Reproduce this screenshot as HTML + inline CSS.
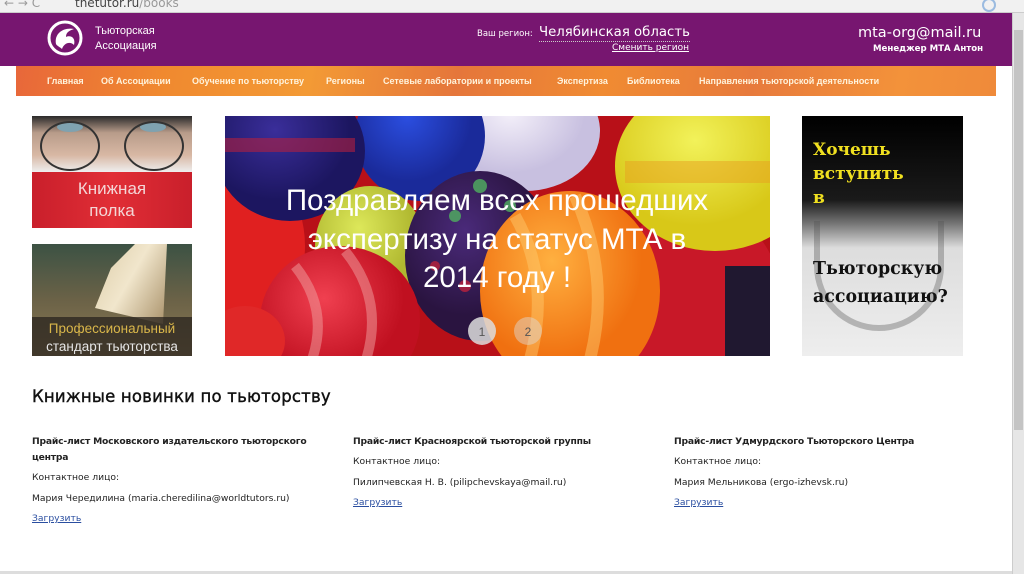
<!DOCTYPE html>
<html><head><meta charset="utf-8"><style>
*{margin:0;padding:0;box-sizing:border-box}
body{width:1024px;height:574px;overflow:hidden;background:#fff;font-family:"DejaVu Sans","Liberation Sans",sans-serif;position:relative}
.abs{position:absolute}
.chrome{left:0;top:0;width:1024px;height:13px;background:#f1f1f1;border-bottom:1px solid #ccc;font-size:12px;color:#555;}
.top{left:0;top:13px;width:1012px;height:53px;background:#771670;color:#fff}
.nav{left:16px;top:66px;width:980px;height:30px;background:linear-gradient(100deg,#e8673a 0%,#f0892f 15%,#f39a35 30%,#e5763b 45%,#f08b32 60%,#e77a3c 75%,#f3923a 90%,#ef8a3a 100%)}
.nav span{position:absolute;top:10px;font-size:9px;color:#fff3dc;font-weight:bold;white-space:nowrap;font-family:"Liberation Sans",sans-serif}
.scroll{left:1012px;top:13px;width:12px;height:561px;background:#e6e6e6;border-left:1px solid #ccc}
.thumb{left:1014px;top:30px;width:9px;height:400px;background:#c4c4c4}
h2{position:absolute;left:32px;top:387px;font-size:16.5px;font-weight:normal;-webkit-text-stroke:0.4px #111;color:#111;letter-spacing:.2px}
.col{position:absolute;top:434px;width:300px;font-size:9.2px;color:#222;line-height:20.5px}
.col b{font-weight:bold;line-height:16px;display:block;margin-bottom:2px;letter-spacing:-.2px}
.col a{color:#2a4ea0;text-decoration:underline}
</style></head><body>
<div class="abs chrome"><span style="position:absolute;left:4px;top:-4px;color:#999">← → C</span><span style="position:absolute;left:75px;top:-4px;color:#444">thetutor.ru<span style="color:#999">/books</span></span><span style="position:absolute;left:982px;top:-2px;width:14px;height:14px;border-radius:50%;border:2px solid #9bbbe0"></span></div>
<div class="abs top">
  <svg class="abs" style="left:46px;top:6px" width="38" height="38" viewBox="0 0 38 38"><circle cx="19" cy="19" r="16" fill="none" stroke="#fff" stroke-width="3"/><path d="M10 25 C8 14 18 8 28 10 C22 12 20 14 20 18 C24 16 30 18 28 26 C24 22 18 24 16 30 C14 28 11 27 10 25Z" fill="#fff"/></svg>
  <div class="abs" style="left:95px;top:11px;font-size:11px;line-height:15px;font-family:'Liberation Sans',sans-serif">Тьюторская<br>Ассоциация</div>
  <div class="abs" style="left:477px;top:16px;font-size:8.5px">Ваш регион:</div>
  <div class="abs" style="left:539px;top:11px;font-size:13.3px;border-bottom:1px dotted #ccc;line-height:17px">Челябинская область</div>
  <div class="abs" style="left:612px;top:30px;font-size:9px;text-decoration:underline">Сменить регион</div>
  <div class="abs" style="left:858px;top:12px;font-size:14.5px">mta-org@mail.ru</div>
  <div class="abs" style="left:873px;top:31px;font-size:8.6px;font-weight:bold">Менеджер МТА Антон</div>
</div>
<div class="abs nav">
<span style="left:31px">Главная</span><span style="left:85px">Об Ассоциации</span><span style="left:176px">Обучение по тьюторству</span><span style="left:310px">Регионы</span><span style="left:367px">Сетевые лаборатории и проекты</span><span style="left:541px">Экспертиза</span><span style="left:611px">Библиотека</span><span style="left:683px">Направления тьюторской деятельности</span>
</div>
<div class="abs scroll"></div><div class="abs thumb"></div>

<div class="abs" style="left:32px;top:116px;width:160px;height:112px;overflow:hidden;background:#d9232e">
  <div class="abs" style="left:0;top:0;width:160px;height:56px;background:linear-gradient(#2a2a2a,#b89c8a 30%,#d8b8a4 70%,#eee)"></div>
  <div class="abs" style="left:25px;top:6px;width:26px;height:10px;border-radius:50%;background:#7fa2b0"></div>
  <div class="abs" style="left:108px;top:6px;width:26px;height:10px;border-radius:50%;background:#7fa2b0"></div>
  <div class="abs" style="left:8px;top:5px;width:60px;height:50px;border:2px solid #333;border-radius:50%"></div>
  <div class="abs" style="left:92px;top:5px;width:60px;height:50px;border:2px solid #333;border-radius:50%"></div>
  <div class="abs" style="left:0;top:56px;width:160px;height:56px;background:linear-gradient(90deg,#c91f2b,#e12e36 50%,#c91f2b)"></div>
  <div class="abs" style="left:0;top:62px;width:160px;text-align:center;color:#f3d6d6;font-size:17px;line-height:22px;font-family:'Liberation Sans',sans-serif">Книжная<br>полка</div>
</div>
<div class="abs" style="left:32px;top:244px;width:160px;height:112px;overflow:hidden;background:linear-gradient(#3c5244,#6b6247 50%,#8c7a55)">
  <div class="abs" style="left:55px;top:0;width:80px;height:80px;background:linear-gradient(120deg,#d9c9a3,#f1e6cc 50%,#a89068);clip-path:polygon(30% 30%,60% 0,100% 0,95% 100%,10% 80%)"></div>
  <div class="abs" style="left:0;top:73px;width:160px;height:39px;background:rgba(40,35,30,.75)"></div>
  <div class="abs" style="left:0;top:76px;width:160px;text-align:center;font-size:13.5px;line-height:18px;font-family:'Liberation Sans',sans-serif;color:#e5e5e5"><span style="color:#d9b64a">Профессиональный</span><br>стандарт тьюторства</div>
</div>

<svg class="abs" style="left:225px;top:116px" width="545" height="240" viewBox="0 0 545 240">
<defs>
<radialGradient id="g1" cx=".4" cy=".35"><stop offset="0" stop-color="#3a2e9a"/><stop offset="1" stop-color="#1c1660"/></radialGradient>
<radialGradient id="g2" cx=".4" cy=".35"><stop offset="0" stop-color="#2b4ee0"/><stop offset="1" stop-color="#1a2a9a"/></radialGradient>
<radialGradient id="g3" cx=".4" cy=".35"><stop offset="0" stop-color="#f4f0fa"/><stop offset="1" stop-color="#c8c0e0"/></radialGradient>
<radialGradient id="g4" cx=".4" cy=".35"><stop offset="0" stop-color="#f2f25a"/><stop offset="1" stop-color="#d8c818"/></radialGradient>
<radialGradient id="g5" cx=".4" cy=".35"><stop offset="0" stop-color="#dde85a"/><stop offset="1" stop-color="#b0b830"/></radialGradient>
<radialGradient id="g6" cx=".4" cy=".35"><stop offset="0" stop-color="#4a2a7a"/><stop offset="1" stop-color="#2a1440"/></radialGradient>
<radialGradient id="g7" cx=".4" cy=".35"><stop offset="0" stop-color="#ffb040"/><stop offset="1" stop-color="#f07010"/></radialGradient>
<radialGradient id="g8" cx=".4" cy=".35"><stop offset="0" stop-color="#f04050"/><stop offset="1" stop-color="#c01020"/></radialGradient>
</defs>
<rect width="545" height="240" fill="#b81018"/>
<ellipse cx="10" cy="130" rx="70" ry="90" fill="#e02020"/>
<ellipse cx="470" cy="180" rx="85" ry="90" fill="#c81828"/>
<rect x="500" y="150" width="45" height="90" fill="#201830"/>
<ellipse cx="490" cy="50" rx="100" ry="85" fill="url(#g4)"/>
<rect x="400" y="45" width="145" height="22" fill="#e8a020" opacity=".5"/>
<ellipse cx="300" cy="15" rx="75" ry="60" fill="url(#g3)"/>
<ellipse cx="195" cy="20" rx="65" ry="65" fill="url(#g2)"/>
<ellipse cx="65" cy="35" rx="75" ry="70" fill="url(#g1)"/>
<rect x="0" y="22" width="130" height="14" fill="#b02040" opacity=".6"/>
<ellipse cx="145" cy="130" rx="55" ry="60" fill="url(#g5)"/>
<ellipse cx="255" cy="140" rx="75" ry="85" fill="url(#g6)"/>
<g fill="#50b060" opacity=".8"><circle cx="255" cy="70" r="7"/><circle cx="230" cy="100" r="6"/><circle cx="285" cy="90" r="6"/></g>
<g fill="#a02040"><circle cx="210" cy="150" r="5"/><circle cx="240" cy="170" r="6"/><circle cx="275" cy="185" r="5"/></g>
<ellipse cx="345" cy="175" rx="90" ry="100" fill="url(#g7)"/>
<g stroke="#ffcc70" stroke-width="12" opacity=".45" fill="none"><path d="M290 100 Q330 170 300 260"/><path d="M350 80 Q390 170 360 260"/></g>
<ellipse cx="115" cy="205" rx="80" ry="75" fill="url(#g8)"/>
<g stroke="#f0a0a0" stroke-width="10" opacity=".5" fill="none"><path d="M70 150 Q110 200 80 260"/><path d="M120 135 Q165 190 135 260"/></g>
<ellipse cx="20" cy="225" rx="40" ry="35" fill="#e02828"/>
<g font-family="Liberation Sans,sans-serif" font-size="29.5" fill="#fff" text-anchor="middle">
<text x="272" y="94">Поздравляем всех прошедших</text>
<text x="272" y="133">экспертизу на статус МТА в</text>
<text x="272" y="171">2014 году !</text>
</g>
<circle cx="257" cy="215" r="14" fill="#ddd" opacity=".85"/><text x="257" y="220" font-size="12" text-anchor="middle" fill="#555" font-family="Liberation Sans">1</text>
<circle cx="303" cy="215" r="14" fill="#ddd" opacity=".45"/><text x="303" y="220" font-size="12" text-anchor="middle" fill="#555" font-family="Liberation Sans">2</text>
</svg>

<div class="abs" style="left:802px;top:116px;width:161px;height:240px;overflow:hidden;background:linear-gradient(#000 0%,#1a1a1a 35%,#777 45%,#ddd 55%,#eee 100%)">
  <div class="abs" style="left:12px;top:105px;width:130px;height:110px;border:6px solid rgba(80,80,80,.35);border-top:none;border-radius:0 0 65px 65px"></div>
  <div class="abs" style="left:11px;top:22px;font-family:'DejaVu Serif','Liberation Serif',serif;font-weight:bold;font-size:17px;line-height:24px;color:#f0e020">Хочешь<br>вступить<br>в</div>
  <div class="abs" style="left:11px;top:139px;font-family:'DejaVu Serif','Liberation Serif',serif;font-weight:bold;font-size:17.4px;line-height:28px;color:#111">Тьюторскую<br>ассоциацию?</div>
</div>

<h2>Книжные новинки по тьюторству</h2>
<div class="col" style="left:32px"><b>Прайс-лист Московского издательского тьюторского центра</b>Контактное лицо:<br>Мария Чередилина (maria.cheredilina@worldtutors.ru)<br><a>Загрузить</a></div>
<div class="col" style="left:353px"><b>Прайс-лист Красноярской тьюторской группы</b>Контактное лицо:<br>Пилипчевская Н. В. (pilipchevskaya@mail.ru)<br><a>Загрузить</a></div>
<div class="col" style="left:674px"><b>Прайс-лист Удмурдского Тьюторского Центра</b>Контактное лицо:<br>Мария Мельникова (ergo-izhevsk.ru)<br><a>Загрузить</a></div>
<div class="abs" style="left:0;top:571px;width:1012px;height:3px;background:#ddd"></div>
</body></html>
